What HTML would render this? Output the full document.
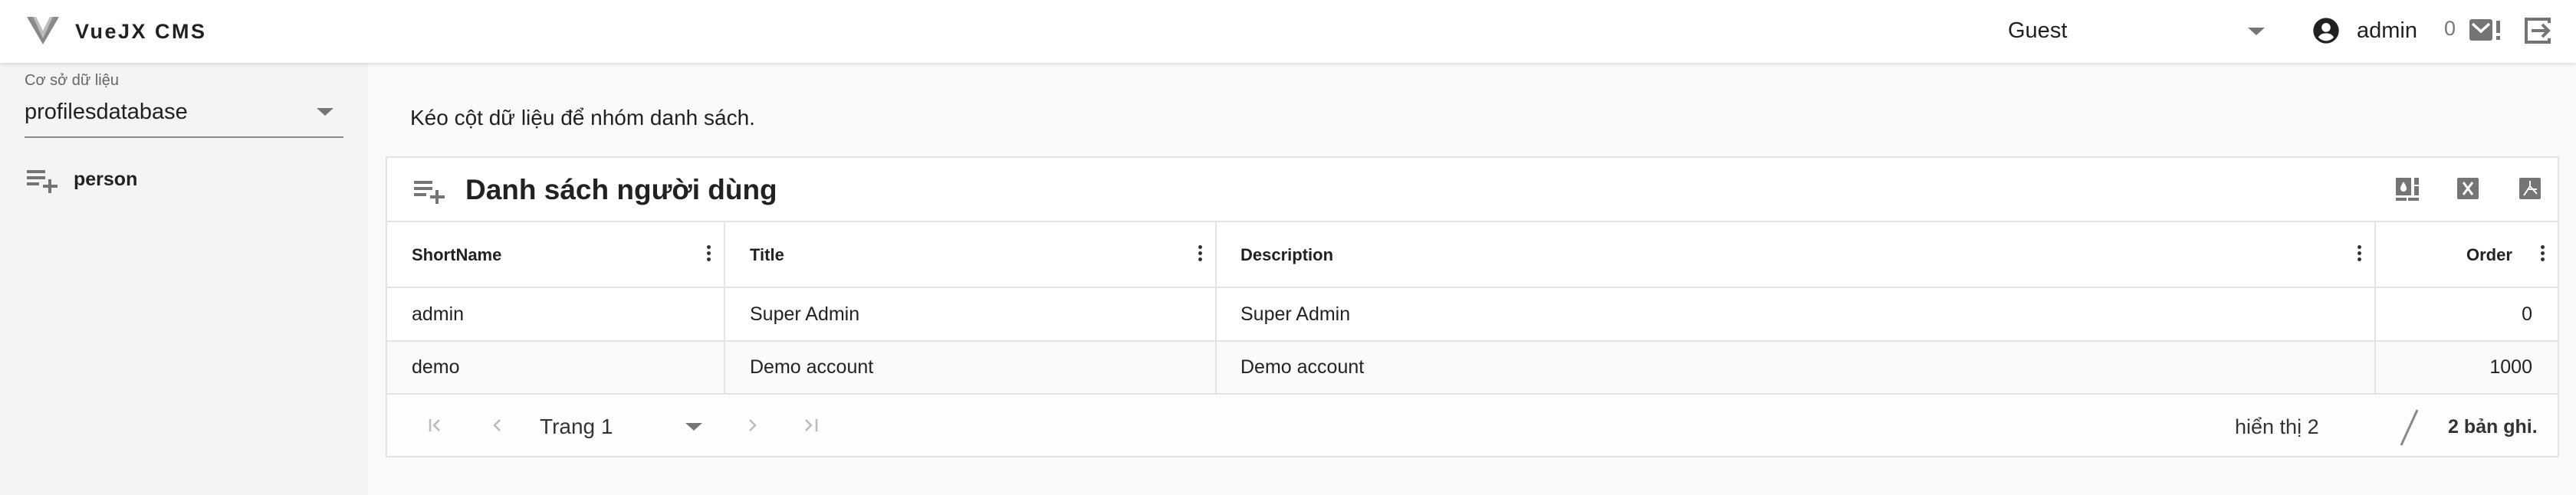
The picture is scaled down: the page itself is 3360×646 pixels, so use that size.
<!DOCTYPE html>
<html><head><meta charset="utf-8">
<style>
*{margin:0;padding:0;box-sizing:border-box}
body{width:3360px;height:646px;overflow:hidden;background:#fafafa;font-family:"Liberation Sans","Noto Sans CJK SC",sans-serif;color:#212121;position:relative}
.a{position:absolute;white-space:nowrap}
.hdr{position:absolute;left:0;top:0;width:3360px;height:82px;background:#fff;box-shadow:0 2px 5px rgba(0,0,0,.12);z-index:2}
.side{position:absolute;left:0;top:82px;width:480px;height:564px;background:#f4f4f4}
.card{position:absolute;left:503px;top:204px;width:2835px;height:393px;background:#fff;border:2px solid #e3e3e3}
.hl{position:absolute;left:0;width:100%;height:2px;background:#e3e3e3}
.vl{position:absolute;width:2px;background:#e3e3e3}
.keb{position:absolute;width:5px}
.keb i{display:block;width:5px;height:5px;border-radius:50%;background:#333;margin-bottom:3px}
.th{font-size:22px;font-weight:bold;color:#222}
.td{font-size:25px;color:#222}
</style></head><body>
<div class="hdr">
  <svg class="a" style="left:35px;top:22px" width="42" height="36" viewBox="0 0 42 36"><path d="M0 0h10l11 22 11-22h10L21 36z" fill="#8a8a8a"/><path d="M8 0h4l9 18 9-18h4L21 28z" fill="#bdbdbd"/></svg>
  <div class="a" style="left:98px;top:24px;font-size:27px;font-weight:bold;letter-spacing:2.5px;line-height:34px">VueJX CMS</div>
  <div class="a" style="left:2619px;top:22px;font-size:29px;line-height:36px">Guest</div>
  <svg class="a" style="left:2932px;top:36px" width="22" height="10"><path d="M0 0h22L11 10z" fill="#757575"/></svg>
  <svg class="a" style="left:3014px;top:20px" width="40" height="40" viewBox="0 0 24 24"><path fill="#212121" d="M12 2a10 10 0 100 20 10 10 0 000-20zm0 4a3.5 3.5 0 110 7 3.5 3.5 0 010-7zm0 14a8 8 0 01-6-2.8c.8-2 3.3-3.2 6-3.2s5.2 1.2 6 3.2A8 8 0 0112 20z"/></svg>
  <div class="a" style="left:3074px;top:22px;font-size:29px;line-height:36px">admin</div>
  <div class="a" style="left:3188px;top:20px;font-size:27px;color:#777;line-height:34px">0</div>
  <svg class="a" style="left:3221px;top:25px" width="44" height="28" viewBox="0 0 44 28"><rect width="30" height="28" rx="3" fill="#757575"/><path d="M4 6l11 10 11-10" stroke="#fff" stroke-width="3.5" fill="none"/><rect x="35" y="2" width="5" height="16" fill="#757575"/><rect x="35" y="22" width="5" height="5" fill="#757575"/></svg>
  <svg class="a" style="left:3292px;top:22px" width="36" height="36" viewBox="0 0 36 36"><path d="M33 8V3H3v30h30v-5" stroke="#757575" stroke-width="4" fill="none"/><path d="M10 18h22M24 10l8 8-8 8" stroke="#757575" stroke-width="4" fill="none"/></svg>
</div>
<div class="side">
  <div class="a" style="left:32px;top:10px;font-size:20px;color:#666;line-height:26px">Cơ sở dữ liệu</div>
  <div class="a" style="left:32px;top:46px;font-size:29px;line-height:36px">profilesdatabase</div>
  <svg class="a" style="left:413px;top:59px" width="22" height="10"><path d="M0 0h22L11 10z" fill="#757575"/></svg>
  <div class="a" style="left:32px;top:96px;width:416px;height:2px;background:#8a8a8a"></div>
  <svg class="a" style="left:35px;top:140px" width="42" height="30" viewBox="0 0 42 30"><path d="M0 2h24M0 10h24M0 18h16M30 12v18M21 21h19" stroke="#757575" stroke-width="4" fill="none"/></svg>
  <div class="a" style="left:96px;top:136px;font-size:25px;font-weight:bold;color:#222;line-height:32px">person</div>
</div>
<div class="a" style="left:535px;top:136px;font-size:28px;line-height:36px">Kéo cột dữ liệu để nhóm danh sách.</div>
<div class="card">
  <svg class="a" style="left:35px;top:30px" width="42" height="30" viewBox="0 0 42 30"><path d="M0 2h24M0 10h24M0 18h16M30 12v18M21 21h19" stroke="#757575" stroke-width="4" fill="none"/></svg>
  <div class="a" style="left:102px;top:19px;font-size:37px;font-weight:bold;line-height:46px;color:#222">Danh sách người dùng</div>
  <svg class="a" style="left:2620px;top:26px" width="32" height="30" viewBox="0 0 32 30"><rect width="20" height="23" fill="#757575"/><path d="M10 5c-3 5-4 7-4 9a4 4 0 008 0c0-2-1-4-4-9z" fill="#fff"/><rect x="24" y="0" width="6" height="23" fill="#757575"/><rect x="24" y="9" width="6" height="2" fill="#fff"/><rect y="26" width="14" height="4" fill="#757575"/><rect x="16" y="26" width="14" height="4" fill="#757575"/></svg>
  <svg class="a" style="left:2700px;top:26px" width="28" height="28" viewBox="0 0 28 28"><rect width="28" height="28" rx="2" fill="#757575"/><path d="M8 6l12 16M20 6L8 22" stroke="#fff" stroke-width="3"/></svg>
  <svg class="a" style="left:2781px;top:26px" width="28" height="28" viewBox="0 0 28 28"><rect width="28" height="28" rx="2" fill="#757575"/><path d="M14 4v7l-8 12M14 11l9 10M12 15h11" stroke="#fff" stroke-width="2" fill="none"/></svg>
  <div class="hl" style="top:82px"></div>
  <div class="vl" style="left:439px;top:84px;height:223px"></div>
  <div class="vl" style="left:1080px;top:84px;height:223px"></div>
  <div class="vl" style="left:2592px;top:84px;height:223px"></div>
  <div class="a th" style="left:32px;top:113px;line-height:28px">ShortName</div>
  <div class="keb" style="left:417px;top:114px"><i></i><i></i><i></i></div>
  <div class="a th" style="left:473px;top:113px;line-height:28px">Title</div>
  <div class="keb" style="left:1058px;top:114px"><i></i><i></i><i></i></div>
  <div class="a th" style="left:1113px;top:113px;line-height:28px">Description</div>
  <div class="keb" style="left:2570px;top:114px"><i></i><i></i><i></i></div>
  <div class="a th" style="left:2712px;top:113px;line-height:28px">Order</div>
  <div class="keb" style="left:2809px;top:114px"><i></i><i></i><i></i></div>
  <div class="hl" style="top:168px"></div>
  <div class="a td" style="left:32px;top:188px;line-height:32px">admin</div>
  <div class="a td" style="left:473px;top:188px;line-height:32px">Super Admin</div>
  <div class="a td" style="left:1113px;top:188px;line-height:32px">Super Admin</div>
  <div class="a td" style="right:33px;top:188px;line-height:32px">0</div>
  <div class="hl" style="top:238px"></div>
  <div class="a" style="left:0;top:240px;width:100%;height:67px;background:#fafafa"></div>
  <div class="vl" style="left:439px;top:240px;height:67px"></div>
  <div class="vl" style="left:1080px;top:240px;height:67px"></div>
  <div class="vl" style="left:2592px;top:240px;height:67px"></div>
  <div class="a td" style="left:32px;top:257px;line-height:32px">demo</div>
  <div class="a td" style="left:473px;top:257px;line-height:32px">Demo account</div>
  <div class="a td" style="left:1113px;top:257px;line-height:32px">Demo account</div>
  <div class="a td" style="right:33px;top:257px;line-height:32px">1000</div>
  <div class="hl" style="top:307px"></div>
  <div class="a" style="left:0;top:309px;width:100%;height:80px;background:#fdfdfd"></div>
  <svg class="a" style="left:53px;top:339px" width="20" height="20" viewBox="0 0 20 20"><path d="M3 2v16M15 3l-7 7 7 7" stroke="#bbb" stroke-width="2.5" fill="none"/></svg>
  <svg class="a" style="left:136px;top:339px" width="16" height="20" viewBox="0 0 16 20"><path d="M11 3l-7 7 7 7" stroke="#bbb" stroke-width="2.5" fill="none"/></svg>
  <div class="a" style="left:199px;top:334px;font-size:28px;color:#333;line-height:34px">Trang 1</div>
  <svg class="a" style="left:389px;top:346px" width="22" height="10"><path d="M0 0h22L11 10z" fill="#757575"/></svg>
  <svg class="a" style="left:468px;top:339px" width="16" height="20" viewBox="0 0 16 20"><path d="M5 3l7 7-7 7" stroke="#bbb" stroke-width="2.5" fill="none"/></svg>
  <svg class="a" style="left:543px;top:339px" width="20" height="20" viewBox="0 0 20 20"><path d="M3 3l7 7-7 7M17 2v16" stroke="#bbb" stroke-width="2.5" fill="none"/></svg>
  <div class="a" style="left:2410px;top:334px;font-size:27px;color:#333;line-height:34px">hiển thị 2</div>
  <svg class="a" style="left:2624px;top:328px" width="26" height="48"><path d="M24 1L3 47" stroke="#888" stroke-width="3"/></svg>
  <div class="a" style="left:2688px;top:334px;font-size:25px;font-weight:bold;color:#333;line-height:34px">2 bản ghi.</div>
</div>
</body></html>
